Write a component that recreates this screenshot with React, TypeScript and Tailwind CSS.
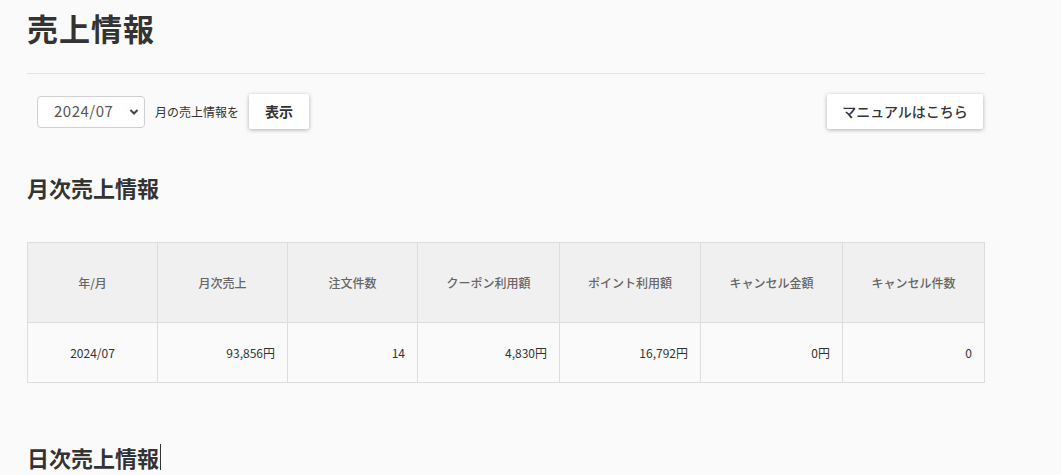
import React from "react";

const headers = ["年/月", "月次売上", "注文件数", "クーポン利用額", "ポイント利用額", "キャンセル金額", "キャンセル件数"];
const widths = ["w-[130px]", "w-[130px]", "w-[130px]", "w-[142px]", "w-[141px]", "w-[142px]", "w-[142px]"];
const row = ["2024/07", "93,856円", "14", "4,830円", "16,792円", "0円", "0"];

export default function App() {
  return (
    <div
      className="min-h-[475px] bg-[#fafafa] pl-[27px] pt-[8px] text-[#333]"
      style={{ fontFamily: '"Noto Sans CJK JP", "Noto Sans", sans-serif' }}
    >
      <div className="w-[958px]">
        <h1 className="text-[31px] font-bold leading-[40px] tracking-[1px]">売上情報</h1>
        <hr className="mt-[25px] border-0 border-t border-[#e3e3e3]" />

        <div className="mt-[20px] flex h-[35px] items-center">
          <div className="relative ml-[10px] h-[32px] w-[108px]">
            <select
              defaultValue="2024/07"
              className="h-full w-full appearance-none rounded-[4px] border border-[#cfcfcf] bg-white pl-[16px] text-[15px] tracking-[0.5px] text-[#555] outline-none"
            >
              <option>2024/07</option>
            </select>
            <svg
              className="pointer-events-none absolute right-[6px] top-[12px] h-[8px] w-[10px]"
              viewBox="0 0 10 8"
              fill="none"
              stroke="#444"
              strokeWidth="2"
            >
              <path d="M1.5 2 L5 5.5 L8.5 2" />
            </svg>
          </div>
          <span className="ml-[10px] text-[12px]">月の売上情報を</span>
          <button className="ml-[10px] h-[35px] w-[60px] rounded-[2px] bg-white text-[14px] font-bold shadow-[0_1px_4px_rgba(0,0,0,0.3)]">
            表示
          </button>
          <button className="ml-auto mr-[2px] h-[35px] w-[156px] rounded-[2px] bg-white text-[14px] font-medium shadow-[0_1px_4px_rgba(0,0,0,0.3)]">
            マニュアルはこちら
          </button>
        </div>

        <h2 className="mt-[43px] text-[22px] font-bold leading-[30px]">月次売上情報</h2>

        <table className="mt-[40px] w-[957px] table-fixed border-collapse text-[12px]">
          <thead>
            <tr className="h-[80px] bg-[#f0f0f0]">
              {headers.map((h, i) => (
                <th key={h} className={`${widths[i]} border border-[#dddddd] text-center font-medium text-[#666]`}>
                  {h}
                </th>
              ))}
            </tr>
          </thead>
          <tbody>
            <tr className="h-[60px]">
              {row.map((v, i) => (
                <td
                  key={i}
                  className={`border border-[#dddddd] ${i === 0 ? "text-center" : "pr-[12px] text-right"}`}
                >
                  {v}
                </td>
              ))}
            </tr>
          </tbody>
        </table>

        <h2 className="mt-[59px] flex items-center text-[22px] font-bold leading-[30px]">
          日次売上情報
          <span className="ml-[1px] inline-block h-[26px] w-px bg-[#333]" />
        </h2>
      </div>
    </div>
  );
}
